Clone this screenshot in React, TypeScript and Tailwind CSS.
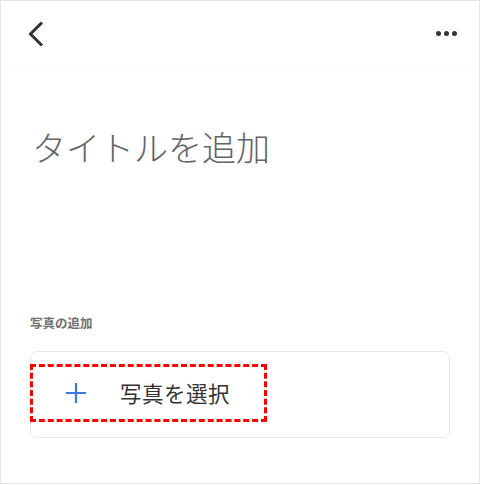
export default function App() {
  return (
    <div
      className="w-[480px] h-[484px] border border-[#e6e6e6] bg-white flex flex-col"
      style={{ fontFamily: '"Noto Sans CJK JP", "Noto Sans", sans-serif' }}
    >
      {/* Header */}
      <div className="flex items-center justify-between h-[70px] pl-[26px] pr-[22px] pb-[4px] border-b border-[#fbfbfb]">
        <button className="w-[20px] h-[28px] flex items-center">
          <svg width="18" height="26" viewBox="0 0 18 26">
            <path
              d="M15 1.5 L3.5 13 L15 24.5"
              fill="none"
              stroke="#333"
              strokeWidth="3"
            />
          </svg>
        </button>
        <button className="flex items-center gap-[3px]">
          <span className="w-[5px] h-[5px] rounded-full bg-[#333]" />
          <span className="w-[5px] h-[5px] rounded-full bg-[#333]" />
          <span className="w-[5px] h-[5px] rounded-full bg-[#333]" />
        </button>
      </div>

      {/* Title */}
      <div className="pl-[31px] pt-[52px]">
        <h1 className="text-[34px] leading-[48px] font-light text-[#626468]">
          タイトルを追加
        </h1>
      </div>

      {/* Photos */}
      <div className="px-[29px] pt-[144px]">
        <p className="text-[12.5px] leading-[16px] font-bold text-[#6f6f6f]">
          写真の追加
        </p>
        <div className="mt-[20px] rounded-[7px] border border-[#e8e9ec] pt-[12px] pb-[15px]">
          <button className="ml-[-1px] w-[237px] h-[58px] border-[3px] border-dashed border-[#ff0000] flex items-center">
            <svg width="20" height="20" viewBox="0 0 20 20" className="ml-[33px]">
              <path d="M10 0 V20 M0 10 H20" stroke="#3b78e7" strokeWidth="2.2" />
            </svg>
            <span className="ml-[34px] text-[21.5px] text-[#333] tracking-[0.5px]">
              写真を選択
            </span>
          </button>
        </div>
      </div>
    </div>
  );
}
